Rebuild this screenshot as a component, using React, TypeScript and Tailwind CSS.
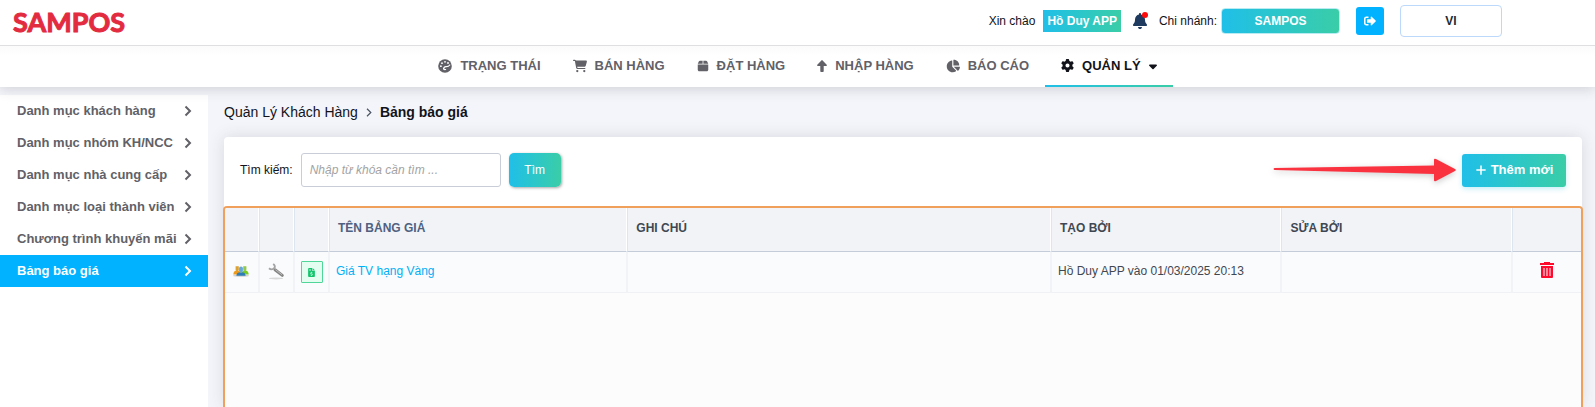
import type { ReactNode } from "react";
import {
  FaBell,
  FaBox,
  FaCaretDown,
  FaCartShopping,
  FaChartPie,
  FaGear,
  FaPlus,
  FaFileInvoiceDollar,
} from "react-icons/fa6";
import { FaSignOutAlt } from "react-icons/fa";

function PaletteIcon() {
  return (
    <svg width="14" height="14" viewBox="0 0 14 14" aria-hidden="true">
      <circle cx="7" cy="7" r="6.8" fill="currentColor" />
      <g fill="#ffffff">
        <circle cx="2.900" cy="7.200" r="0.900" />
        <circle cx="4" cy="4.200" r="0.900" />
        <circle cx="7" cy="2.800" r="0.900" />
        <circle cx="10" cy="4" r="0.900" />
      </g>
      <path d="M5.600 9.800c.2-1.500 1.200-2.300 2.600-2.200 1.600.1 2.700-.4 3.600-1.600" fill="none" stroke="#ffffff" strokeWidth="1.200" strokeLinecap="round" />
      <path d="M5.600 9.600c.3.900 1 1.200 2 .9" fill="none" stroke="#ffffff" strokeWidth="1.200" strokeLinecap="round" />
    </svg>
  );
}

function UpIcon() {
  return (
    <svg width="10" height="12" viewBox="0 0 10 12" fill="currentColor" aria-hidden="true">
      <path d="M4.400.4a.8.800 0 0 1 1.200 0l4.100 4.300c.5.600.2 1.300-.6 1.300H6.700v5.200a.8.800 0 0 1-.8.800H4.100a.8.800 0 0 1-.8-.8V6H.9C.1 6-.2 5.300.3 4.700z" />
    </svg>
  );
}

const navItems: { label: string; icon: ReactNode; active?: boolean }[] = [
  { label: "TRẠNG THÁI", icon: <PaletteIcon /> },
  { label: "BÁN HÀNG", icon: <FaCartShopping size={14} /> },
  { label: "ĐẶT HÀNG", icon: <FaBox size={12} /> },
  { label: "NHẬP HÀNG", icon: <UpIcon /> },
  { label: "BÁO CÁO", icon: <FaChartPie size={14} /> },
  { label: "QUẢN LÝ", icon: <FaGear size={13} />, active: true },
];

const menuItems = [
  "Danh mục khách hàng",
  "Danh mục nhóm KH/NCC",
  "Danh mục nhà cung cấp",
  "Danh mục loại thành viên",
  "Chương trình khuyến mãi",
  "Bảng báo giá",
];

function Chevron({ className }: { className?: string }) {
  return (
    <svg className={className} viewBox="0 0 8 12" fill="none" stroke="currentColor" aria-hidden="true">
      <path d="M1.500 1.500 6 6l-4.500 4.500" strokeWidth="2" />
    </svg>
  );
}

function GroupIcon() {
  return (
    <svg width="16" height="12" viewBox="0 0 16 12" aria-hidden="true">
      <ellipse cx="8" cy="10.800" rx="8" ry="1" fill="#d0d0d0" />
      <path d="M.3 9.500C.5 7 1.500 5.600 4 5.600S7.500 7 7.500 9.500z" fill="#ee9a1c" />
      <path d="M2.600 1.200h3.200v3.400a1.600 1.600 0 0 1-3.200 0z" fill="#dba133" />
      <path d="M8.500 9.500c0-2.500 1-3.900 3.500-3.900s3.500 1.400 3.700 3.900z" fill="#7ccb22" />
      <path d="M10.200 1.200h3.200v3.400a1.600 1.600 0 0 1-3.200 0z" fill="#93c94c" />
      <path d="M3.400 10.800c0-2.500 1.400-3.600 4.600-3.600s4.600 1.100 4.600 3.600z" fill="#2d7cb5" />
      <path d="M6.100 3.300a1.900 1.900 0 0 1 3.800 0v2.200a1.900 1.900 0 0 1-3.800 0z" fill="#62a8d8" />
    </svg>
  );
}

function WrenchIcon() {
  return (
    <svg width="17" height="17" viewBox="0 0 17 17" fill="none" aria-hidden="true">
      <ellipse cx="8" cy="15.400" rx="7" ry="1" fill="#d8d8d8" />
      <path d="M7 6.800 14.300 12.400" stroke="#858585" strokeWidth="3" strokeLinecap="round" />
      <path d="M7.500 6.700 14 11.700" stroke="#bcbcbc" strokeWidth="1" />
      <path d="M1 5.200c1.500 1.300 4 1.300 5.200 0S7 2.300 5.200 1" stroke="#a4a4a4" strokeWidth="1.900" />
    </svg>
  );
}

function TrashIcon() {
  return (
    <svg width="14" height="16" viewBox="0 0 14 16" aria-hidden="true">
      <path d="M0 1h4V0h6v1h4v2H0z" fill="#ff0a2d" />
      <path d="M1 4h12v11a1 1 0 0 1-1 1H2a1 1 0 0 1-1-1z" fill="#ff0a2d" />
      <path d="M3 6h2v8H3zM6 6h2v8H6zM9 6h2v8H9z" fill="#ff8497" />
    </svg>
  );
}

function Arrow() {
  return (
    <svg className="h-6 w-[183px] shrink-0 overflow-visible drop-shadow-[0_2px_3px_rgba(0,0,0,0.2)]" viewBox="0 0 183 24" aria-hidden="true">
      <path d="M1.500 10 161 7.500V2q0-2 2-1l19 10q1.500 1 0 2l-19 10q-2 1-2-1v-6L1.500 12q-2-1 0-2z" fill="#fa3240" />
    </svg>
  );
}

const gradient = "bg-linear-to-r from-[#20bfe8] to-[#3acda7] text-white";
const th =
  "h-11 border-b border-b-[#c3ccd8] border-l border-l-[#dde6ef] border-r border-r-white px-2 pb-1 text-left font-bold first:border-l-0 last:border-r-0";
const td = "h-[41px] border-x border-x-[#f2f3f6] border-b border-b-[#f0f1f5] first:border-l-0 last:border-r-0";

export default function App() {
  return (
    <div className="flex h-screen flex-col overflow-hidden bg-[#f4f5fa] font-['Liberation_Sans',Arial,sans-serif] text-xs text-[#12131a]">
      <div className="relative shrink-0 bg-white shadow-[0_2px_12px_rgba(60,60,75,0.2)]">
        <header className="flex h-[46px] items-center justify-between border-b border-[#dfdfe1] pb-[3px] pl-[13px] pr-[93px]">
          <a href="#home" className="font-['Lato',sans-serif] text-[27px] font-bold leading-none text-[#e32b40] [-webkit-text-stroke:1px_#e32b40]">
            SAMPOS
          </a>
          <div className="flex items-center">
            <span>Xin chào</span>
            <a href="#account" className={`ml-2 px-1 py-[3px] font-bold leading-4 ${gradient}`}>
              Hồ Duy APP
            </a>
            <button aria-label="Thông báo" className="relative ml-3 text-[#1e3a5f]">
              <FaBell size={14} className="h-4" />
              <span className="absolute -right-px -top-px size-[6px] rounded-full bg-[#ff0a0a]" />
            </button>
            <span className="ml-3">Chi nhánh:</span>
            <button className={`ml-1 h-[26px] w-[119px] rounded-[4px] border border-[#b9ecf2] bg-origin-border font-bold ${gradient}`}>
              SAMPOS
            </button>
            <button aria-label="Đăng xuất" className="ml-4 flex size-7 items-center justify-center rounded-[3px] bg-[#00b2ff] text-white">
              <FaSignOutAlt size={12} />
            </button>
            <button className="ml-4 h-8 w-[102px] rounded-[4px] border border-[#bcd8fb] bg-white font-bold text-[#1d2b32]">VI</button>
          </div>
        </header>
        <nav className="flex h-[41px] justify-center bg-linear-to-b from-[#fbfbfc] to-white to-25% text-[13px] font-bold text-[#616167]">
          {navItems.map((item) => (
            <a
              key={item.label}
              href="#nav"
              className={
                item.active
                  ? "flex items-center gap-2 border-b-2 px-4 text-[#12131a] [border-image:linear-gradient(90deg,#20bfe8,#3acda7)_1]"
                  : "flex items-center gap-2 border-b-2 border-transparent px-4"
              }
            >
              {item.icon}
              {item.label}
              {item.active && <FaCaretDown size={14} className="w-2" />}
            </a>
          ))}
        </nav>
      </div>

      <div className="flex min-h-0 flex-1">
        <aside className="mt-2 w-52 shrink-0 bg-white text-[13px] font-bold text-[#616167]">
          <ul>
            {menuItems.map((label) => (
              <li key={label}>
                <a
                  href="#menu"
                  className={
                    label === "Bảng báo giá"
                      ? "flex h-8 items-center justify-between bg-[#00b2ff] pl-[17px] pr-4 text-white"
                      : "flex h-8 items-center justify-between pl-[17px] pr-4"
                  }
                >
                  <span className="whitespace-nowrap">{label}</span>
                  <Chevron className="h-3 w-2 shrink-0" />
                </a>
              </li>
            ))}
          </ul>
        </aside>

        <main className="flex min-w-0 flex-1 flex-col pl-4 pr-[13px] pt-[15px]">
          <div className="flex h-5 shrink-0 items-center gap-2 text-sm leading-5">
            <a href="#customers">Quản Lý Khách Hàng</a>
            <svg className="h-[9px] w-[6px]" viewBox="0 0 6 9" fill="none" stroke="#4b5563" aria-hidden="true">
              <path d="M1 .8 4.800 4.500 1 8.200" strokeWidth="1.200" />
            </svg>
            <span className="font-bold">Bảng báo giá</span>
          </div>

          <section className="mt-[15px] flex min-h-0 flex-1 flex-col rounded-t-[4px] bg-white shadow-[0_0_16px_rgba(60,60,80,0.15)]">
            <div className="flex shrink-0 items-center justify-between px-4 pb-[19px] pt-4">
              <div className="flex items-center">
                <label htmlFor="keyword">Tìm kiếm:</label>
                <input
                  id="keyword"
                  placeholder="Nhập từ khóa cần tìm ..."
                  className="ml-2 h-[34px] w-[200px] rounded-[3px] border border-[#c9cdd8] bg-white px-2 placeholder:italic placeholder:text-[#a3a3a3]"
                />
                <button className={`ml-2 h-[34px] w-[52px] rounded-[5px] shadow-[1px_1px_3px_rgba(0,0,0,0.35)] ${gradient}`}>Tìm</button>
              </div>
              <div className="flex items-center gap-[6px]">
                <Arrow />
                <button className={`flex h-[33px] w-[104px] items-center justify-center gap-1 rounded-[3px] text-[13px] font-bold shadow-[0_2px_5px_rgba(32,191,232,0.25)] ${gradient}`}>
                  <FaPlus size={12} />
                  Thêm mới
                </button>
              </div>
            </div>

            <div className="-mx-px flex-1 overflow-hidden rounded-t-[4px] border-2 border-b-0 border-[#f0a05a] bg-[#fcfcfc]">
              <table className="w-full table-fixed border-separate border-spacing-0 text-[#3f4852]">
                <colgroup>
                  <col className="w-[34px]" />
                  <col className="w-[35px]" />
                  <col className="w-[35px]" />
                  <col className="w-[22%]" />
                  <col />
                  <col className="w-[17%]" />
                  <col className="w-[17%]" />
                  <col className="w-[69px]" />
                </colgroup>
                <thead className="bg-[#f2f3f7]">
                  <tr>
                    <th className={th} />
                    <th className={th} />
                    <th className={th} />
                    <th className={`${th} text-[#4f6180]`}>TÊN BẢNG GIÁ</th>
                    <th className={th}>GHI CHÚ</th>
                    <th className={th}>TẠO BỞI</th>
                    <th className={th}>SỬA BỞI</th>
                    <th className={th} />
                  </tr>
                </thead>
                <tbody className="bg-[#fafbfd]">
                  <tr>
                    <td className={`${td} pb-[2px]`}>
                      <button aria-label="Nhóm khách hàng" className="ml-2 block">
                        <GroupIcon />
                      </button>
                    </td>
                    <td className={`${td} pb-[2px]`}>
                      <button aria-label="Thiết lập" className="mx-auto block">
                        <WrenchIcon />
                      </button>
                    </td>
                    <td className={td}>
                      <button aria-label="Xuất bảng giá" className="mx-auto flex size-[22px] items-center justify-center rounded-[1px] border border-[#50d698] bg-[#e4fdf1] text-[#14c46c]">
                        <FaFileInvoiceDollar size={9} />
                      </button>
                    </td>
                    <td className={`${td} px-[6px] pb-[2px]`}>
                      <a href="#price" className="text-[#00aff5]">Giá TV hạng Vàng</a>
                    </td>
                    <td className={td} />
                    <td className={`${td} px-[6px] pb-[2px]`}>Hồ Duy APP vào 01/03/2025 20:13</td>
                    <td className={td} />
                    <td className={`${td} pb-1`}>
                      <button aria-label="Xóa" className="mx-auto block">
                        <TrashIcon />
                      </button>
                    </td>
                  </tr>
                </tbody>
              </table>
            </div>
          </section>
        </main>
      </div>
    </div>
  );
}
